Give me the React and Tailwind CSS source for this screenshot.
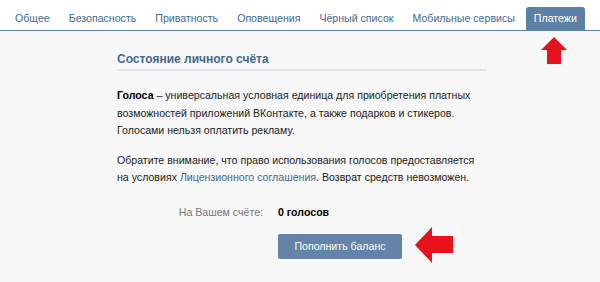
import React from 'react';

const tabs = ['Общее', 'Безопасность', 'Приватность', 'Оповещения', 'Чёрный список', 'Мобильные сервисы', 'Платежи'];

function UpArrow() {
  return (
    <svg width="28" height="28" viewBox="0 0 28 28" className="absolute left-[540px] top-[37px]">
      <polygon points="14,0 27,13 21,13 21,27 7,27 7,13 1,13" fill="#e8121d" />
    </svg>
  );
}

function LeftArrow() {
  return (
    <svg width="40" height="38" viewBox="0 0 40 38" className="absolute left-[414px] top-[226px]">
      <polygon points="1,19 18,1 18,10 39,10 39,27 18,27 18,37" fill="#e8121d" />
    </svg>
  );
}

export default function App() {
  return (
    <div className="relative w-[600px] h-[282px] bg-[#f7f7f7] font-['Liberation_Sans',Arial,sans-serif] text-[10.6px] text-[#000] overflow-hidden">
      {/* tabs */}
      <div className="h-[31px] bg-white border-b border-[#5e81a8] flex items-end gap-[3px] pl-[7px]">
        {tabs.map((t) => (
          <div
            key={t}
            className={`h-[23px] px-[8px] flex items-center leading-none whitespace-nowrap ${
              t === 'Платежи' ? 'bg-[#5d80a7] text-white rounded-t-[3px]' : 'text-[#45688e]'
            }`}
          >
            {t}
          </div>
        ))}
      </div>

      <div className="ml-[117px] w-[370px] pt-[21px]">
        <div className="text-[12px] font-bold text-[#45688e] leading-[14px] pb-[3px] border-b-2 border-[#dfe4ea]">
          Состояние личного счёта
        </div>
        <div className="mt-[16px] leading-[17.5px] text-[#222] whitespace-nowrap">
          <p>
            <b className="text-black">Голоса</b> – универсальная условная единица для приобретения платных
            <br />
            возможностей приложений ВКонтакте, а также подарков и стикеров.
            <br />
            Голосами нельзя оплатить рекламу.
          </p>
          <p className="mt-[12px]">
            Обратите внимание, что право использования голосов предоставляется
            <br />
            на условиях <span className="text-[#45688e]">Лицензионного соглашения</span>. Возврат средств невозможен.
          </p>
        </div>
        <div className="flex items-center mt-[18px]">
          <div className="w-[161px] text-right pr-[15px] text-[#777]">На Вашем счёте:</div>
          <div className="font-bold text-black">0 голосов</div>
        </div>
        <div className="flex mt-[14px] pl-[161px]">
          <div className="w-[124px] h-[25px] rounded-[2px] bg-[#6383a8] text-white flex items-center justify-center">
            Пополнить баланс
          </div>
        </div>
      </div>

      <UpArrow />
      <LeftArrow />
    </div>
  );
}
